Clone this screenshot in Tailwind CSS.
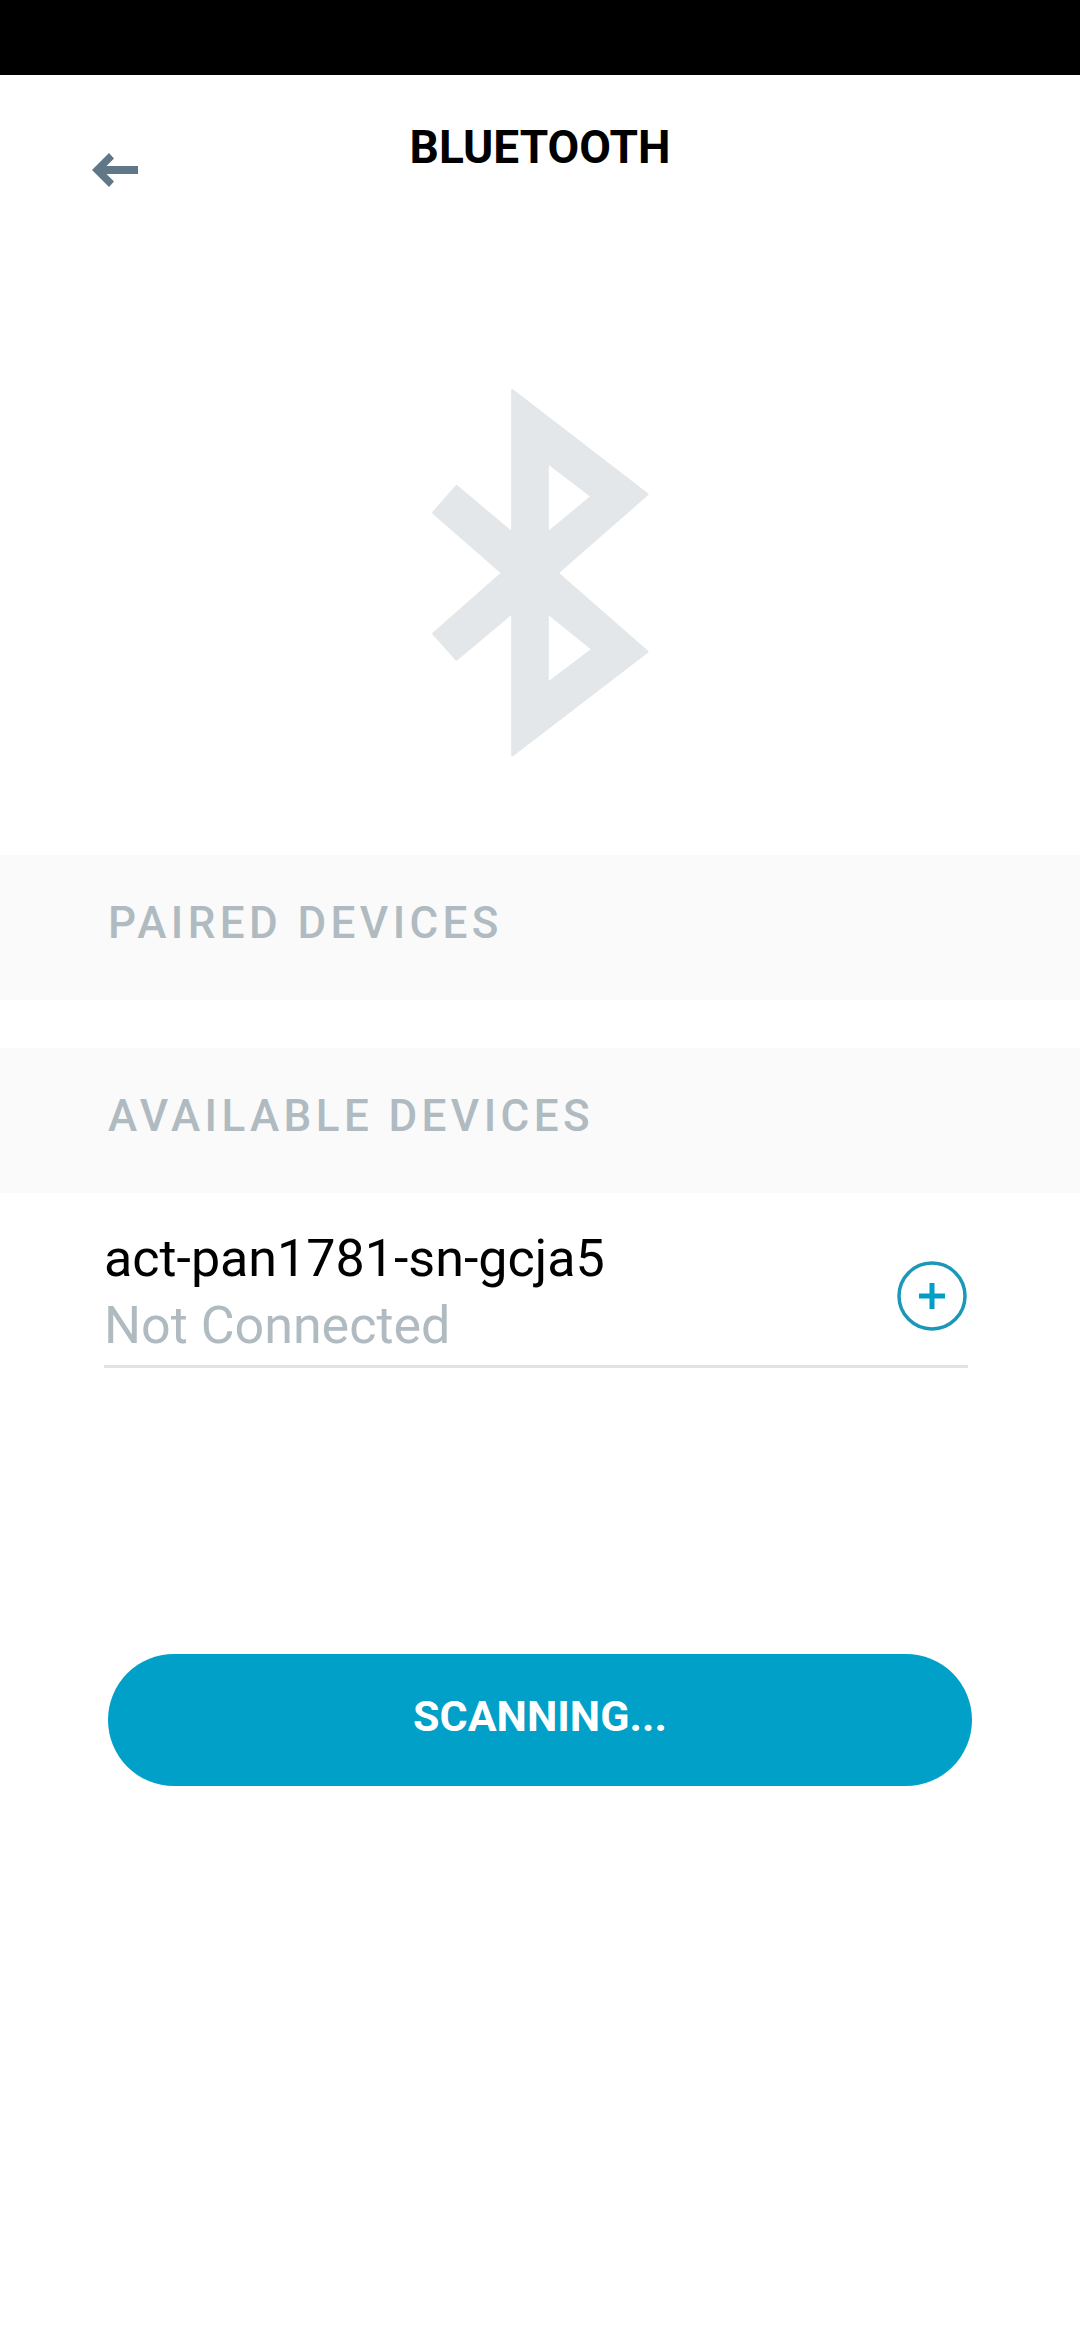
<!DOCTYPE html>
<html lang="en">
<head>
<meta charset="utf-8">
<meta name="viewport" content="width=device-width, initial-scale=1">
<title>Bluetooth</title>
<script src="https://cdn.jsdelivr.net/npm/@tailwindcss/browser@4"></script>
</head>
<body class="min-h-screen bg-white font-['Roboto',sans-serif] text-black">
  <div class="h-[75px] bg-black"></div>
  <header class="grid grid-cols-[1fr_auto_1fr] items-start px-20 pt-10">
    <button type="button" aria-label="Back" class="mt-6 flex size-[62px] items-center justify-start pl-3">
      <svg class="h-[34px] w-[46px]" viewBox="0 0 46 34" fill="#5f7787" aria-hidden="true"><path d="M0 17 17 0l5 5.500-7.500 7.500H46v8H14.500l7.500 7.500-5 5.500z"/></svg>
    </button>
    <h1 class="text-[46px] leading-[64px] font-bold">BLUETOOTH</h1>
  </header>
  <main>
    <div class="flex justify-center pt-[188px] pb-[98px]">
      <svg class="h-[368px] w-[217px]" viewBox="95 56 650 1104" fill="#e3e7ea" stroke="#e3e7ea" stroke-width="8" stroke-linejoin="round" fill-rule="evenodd" aria-hidden="true"><path d="M336 61 740 372 470 608 740 844 336 1154V726L168 867 99 790 306 608 99 427 168 348 336 489zM441 276V489L575 378zM441 727V940L577 837z"/></svg>
    </div>
    <section>
      <h2 class="h-[145px] bg-[#fafafa] px-[108px] pt-9 text-[44px] leading-[64px] font-medium tracking-widest text-[#b0bac1]">PAIRED DEVICES</h2>
    </section>
    <section class="mt-12">
      <h2 class="h-[145px] bg-[#fafafa] px-[108px] pt-9 text-[44px] leading-[64px] font-medium tracking-widest text-[#b0bac1]">AVAILABLE DEVICES</h2>
      <ul class="pr-28 pl-[104px]">
        <li class="flex items-center justify-between border-b-3 border-[#dfe3e3] pt-8 pb-1.5">
          <div class="text-[52px] leading-[67px]">
            <p>act-pan1781-sn-gcja5</p>
            <p class="text-[#b0bac1]">Not Connected</p>
          </div>
          <button type="button" aria-label="Connect to act-pan1781-sn-gcja5" class="pt-2">
            <svg class="size-[72px]" viewBox="0 0 72 72" fill="none" aria-hidden="true"><circle cx="36" cy="36" r="33" stroke="#1b98b8" stroke-width="3.500"/><path d="M36 23v26M23 36h26" stroke="#009fc7" stroke-width="5"/></svg>
          </button>
        </li>
      </ul>
    </section>
    <div class="px-[108px] pt-[286px]">
      <button type="button" class="block h-[132px] w-full rounded-full bg-[#00a0c8] pb-2 text-[43px] leading-[64px] font-bold text-white">SCANNING...</button>
    </div>
  </main>
</body>
</html>
